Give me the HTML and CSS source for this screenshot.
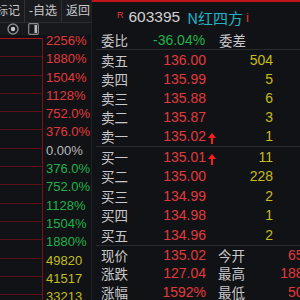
FILE: index.html
```html
<!DOCTYPE html>
<html>
  <head>
    <meta charset="utf-8">
    <link rel="stylesheet" href="styles.css">
  </head>
  <body>
    <div class="screen">
      <div class="side">
        <div class="tabs">
          <span class="tab first">标记</span>
          <span class="tab">-自选</span>
          <span class="tab">返回</span>
        </div>
        <div class="tools">
          <svg class="ico" width="12" height="12" viewBox="0 0 12 12">
            <circle cx="6" cy="6" r="5" fill="none" stroke="#8a8b90" stroke-width="1.4"/>
            <circle cx="6" cy="6" r="2.2" fill="#c8c9cc"/>
          </svg>
          <svg class="ico" width="11" height="12" viewBox="0 0 11 12">
            <rect x="0.7" y="0.7" width="9.6" height="10.6" rx="1" fill="none" stroke="#8a8b90" stroke-width="1.2"/>
            <rect x="6.5" y="2" width="2.5" height="8" fill="#b8b9bc"/>
          </svg>
        </div>
        <div class="chart">
          <div class="canvas"></div>
          <ul class="axis">
            <li class="up">2256%</li>
            <li class="up">1880%</li>
            <li class="up">1504%</li>
            <li class="up">1128%</li>
            <li class="up">752.0%</li>
            <li class="up">376.0%</li>
            <li class="flat">0.00%</li>
            <li class="down">376.0%</li>
            <li class="down">752.0%</li>
            <li class="down">1128%</li>
            <li class="down">1504%</li>
            <li class="down">1880%</li>
            <li class="vol">49820</li>
            <li class="vol">41517</li>
            <li class="vol">33213</li>
          </ul>
        </div>
      </div>

      <div class="quote">
        <div class="title">
          <span class="flag">R</span>
          <span class="code">603395</span>
          <span class="name">N红四方</span>
          <span class="info">i</span>
        </div>

        <div class="row ratio">
          <span class="label">委比</span>
          <span class="down">-36.04%</span>
          <span class="label2">委差</span>
          <span class="down">-1</span>
        </div>

        <div class="book">
          <div class="row"><span class="label">卖五</span><span class="price up">136.00</span><span class="mark"></span><span class="vol">504</span></div>
          <div class="row"><span class="label">卖四</span><span class="price up">135.99</span><span class="mark"></span><span class="vol">5</span></div>
          <div class="row"><span class="label">卖三</span><span class="price up">135.88</span><span class="mark"></span><span class="vol">6</span></div>
          <div class="row"><span class="label">卖二</span><span class="price up">135.87</span><span class="mark"></span><span class="vol">3</span></div>
          <div class="row"><span class="label">卖一</span><span class="price up">135.02</span><span class="mark"><svg width="8" height="11" viewBox="0 0 8 11"><path d="M4 0 L8 5 L5 5 L5 11 L3 11 L3 5 L0 5 Z" fill="#ff1c1c"/></svg></span><span class="vol">1</span></div>
        </div>

        <div class="book buy">
          <div class="row"><span class="label">买一</span><span class="price up">135.01</span><span class="mark"><svg width="8" height="11" viewBox="0 0 8 11"><path d="M4 0 L8 5 L5 5 L5 11 L3 11 L3 5 L0 5 Z" fill="#ff1c1c"/></svg></span><span class="vol">11</span></div>
          <div class="row"><span class="label">买二</span><span class="price up">135.00</span><span class="mark"></span><span class="vol">228</span></div>
          <div class="row"><span class="label">买三</span><span class="price up">134.99</span><span class="mark"></span><span class="vol">2</span></div>
          <div class="row"><span class="label">买四</span><span class="price up">134.98</span><span class="mark"></span><span class="vol">1</span></div>
          <div class="row"><span class="label">买五</span><span class="price up">134.96</span><span class="mark"></span><span class="vol">2</span></div>
        </div>

        <div class="stats">
          <div class="row"><span class="label">现价</span><span class="price up">135.02</span><span class="label2">今开</span><span class="price2 up">65.00</span></div>
          <div class="row"><span class="label">涨跌</span><span class="price up">127.04</span><span class="label2">最高</span><span class="price2 up">188.00</span></div>
          <div class="row"><span class="label">涨幅</span><span class="price up">1592%</span><span class="label2">最低</span><span class="price2 up">50.00</span></div>
        </div>
      </div>
    </div>
  </body>
</html>
```

FILE: styles.css
```css
body{
    margin: 0;
    background: #111215;
    color: #c9c9cb;
    font-family: "Liberation Sans", "Noto Sans CJK SC", sans-serif;
    font-size: 14px;
}
ul{
    margin: 0;
    padding: 0;
    list-style: none;
}
.screen{
    display: flex;
    width: 300px;
    height: 300px;
    overflow: hidden;
}

/* 左侧 分时图坐标 */
.side{
    width: 91px;
    flex: none;
    display: flex;
    flex-direction: column;
    overflow: hidden;
}
.tabs{
    display: flex;
    height: 22px;
    background: #1a1b1f;
    border-bottom: 1px solid #2a2b2f;
    font-size: 12px;
    line-height: 22px;
    white-space: nowrap;
}
.tab{
    padding: 0 4px;
    border-right: 1px solid #303136;
    color: #c9c9cb;
}
.tab.first{
    margin-left: -8px;
}
.tools{
    height: 17px;
    display: flex;
    align-items: center;
    justify-content: flex-end;
    gap: 9px;
    padding-right: 52px;
    background: #17181c;
}
.chart{
    flex: 1;
    display: flex;
    margin-top: 3px;
}
.canvas{
    width: 42px;
    flex: none;
    border-top: 1px solid #b3121a;
    border-right: 1px solid #7c1218;
    background: repeating-linear-gradient(to bottom, transparent 0 17.3px, #5c0f14 17.3px 18.3px);
}
.axis{
    padding-left: 3px;
    margin-top: -6px;
    font-size: 13px;
}
.axis li{
    height: 18.3px;
    line-height: 18.3px;
    text-align: left;
}
.up{ color: #e23a3c; }
.down{ color: #1fb24a; }
.flat{ color: #b9b9bb; }
.vol{ color: #c4bd1e; }

/* 右侧 五档盘口 */
.quote{
    flex: 1;
    border-left: 1px solid #202126;
    white-space: nowrap;
    overflow: hidden;
}
.title{
    height: 28px;
    border-top: 2px solid #c3131b;
    display: flex;
    align-items: center;
    padding-left: 25px;
    padding-top: 1px;
}
.flag{
    color: #e23a3c;
    font-size: 9px;
    align-self: flex-start;
    margin-top: 7px;
    margin-right: 5px;
}
.code{
    font-size: 15.5px;
    color: #d2d2d4;
    margin-right: 7px;
}
.name{
    font-family: "Noto Sans CJK SC", sans-serif;
    font-size: 15px;
    color: #20b3c4;
    margin-right: 3px;
}
.info{
    color: #e23a3c;
    font-size: 13px;
}
.row{
    display: grid;
    grid-template-columns: 49px 56px 12px 55px;
    height: 19px;
    line-height: 19px;
    padding-left: 9px;
}
.label, .label2{
    font-family: "Noto Sans CJK SC", sans-serif;
    font-size: 13.5px;
}
.price, .vol, .price2{
    text-align: right;
}
.mark{
    display: flex;
    justify-content: center;
    align-items: flex-end;
    padding-bottom: 2px;
}
.ratio{
    grid-template-columns: 52px 66px 81px 30px;
    height: 18px;
    line-height: 18px;
    border-bottom: 1px solid #2a2b30;
    margin-left: 4px;
    padding-left: 5px;
}
.book{
    border-bottom: 1px solid #2a2b30;
    margin-left: 4px;
    padding-top: 1px;
}
.book .row{
    padding-left: 5px;
}
.buy .row{
    height: 19.4px;
    line-height: 19.4px;
}
.stats{
    padding-top: 0;
}
.stats .row{
    grid-template-columns: 49px 56px 12px 35px 70px;
    height: 18.5px;
    line-height: 18.5px;
}
.stats .label2{
    grid-column: 4;
}
```
